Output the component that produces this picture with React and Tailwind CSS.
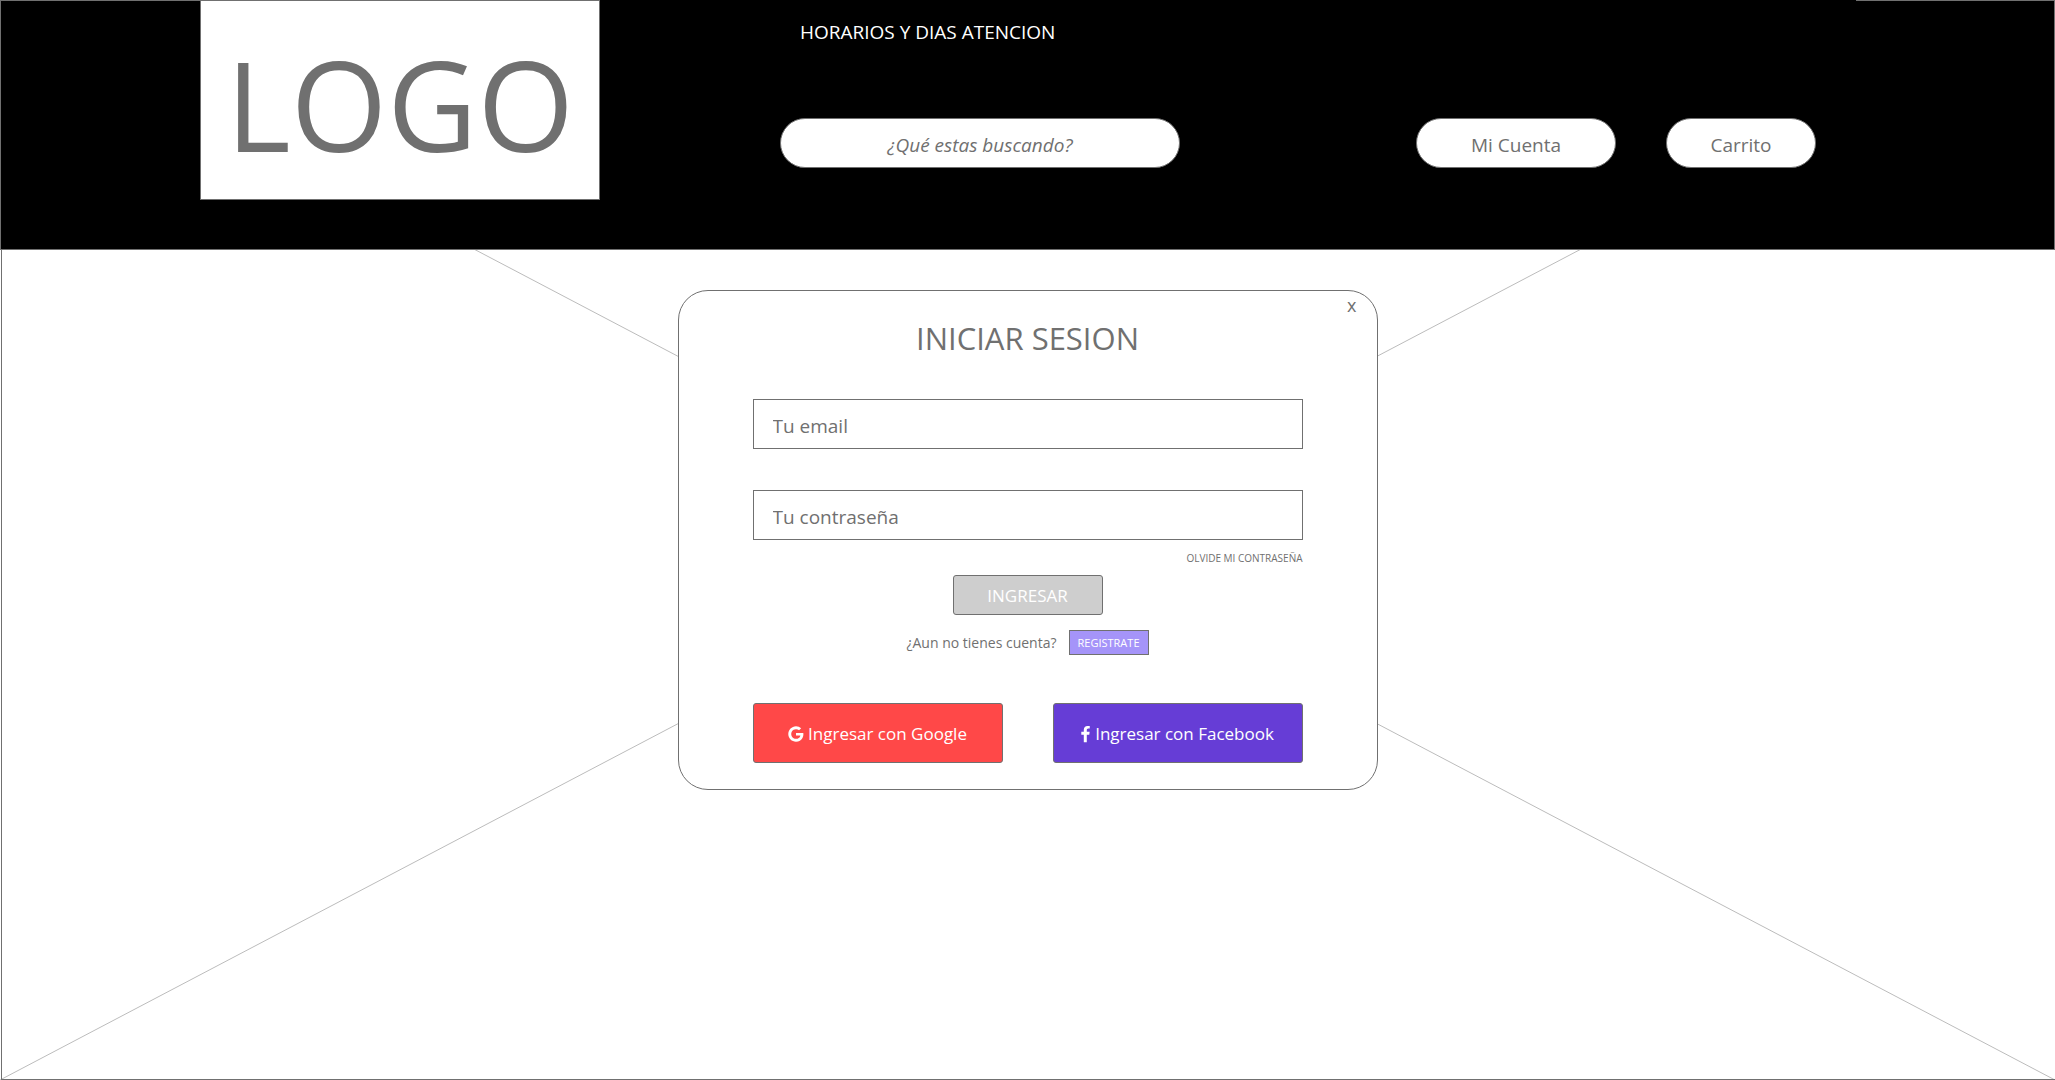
function GoogleIcon() {
  return (
    <svg viewBox="128 0 1536 1792" className="h-[18px] w-4" fill="currentColor" aria-hidden="true">
      <path d="M896 786h725q12 67 12 128 0 217-91 387.5t-259.5 266.5-386.5 96q-157 0-299-60.5t-245-163.5-163.5-245-60.5-299 60.5-299 163.5-245 245-163.5 299-60.5q300 0 515 201l-209 201q-123-119-306-119-129 0-238.5 65t-173.5 176.5-64 243.5 64 243.5 173.5 176.5 238.5 65q87 0 160-24t120-60 82-82 51.5-87 22.5-78h-436v-264z" />
    </svg>
  );
}

function FacebookIcon() {
  return (
    <svg viewBox="448 -64 1024 1792" className="h-[18px] w-[10px]" fill="currentColor" aria-hidden="true">
      <path d="M1343 12v264h-157q-86 0-116 36t-30 108v189h293l-39 296h-254v759h-306v-759h-255v-296h255v-218q0-186 104-288.5t277-102.5q147 0 228 12z" />
    </svg>
  );
}

function Header() {
  return (
    <header className="relative grid h-[250px] grid-cols-[199px_400px_180px_400px_1fr] border border-[#707070] bg-black">
      <div className="absolute -top-px right-[198px] left-[599px] h-px bg-black" />
      <div className="col-start-2 flex h-[199px] items-center justify-center border border-t-0 border-[#707070] bg-white pt-2">
        <a href="#inicio" className="text-[124px] leading-none">LOGO</a>
      </div>
      <div className="col-start-4 pt-[17px]">
        <p className="pl-5 text-[19px] leading-7 text-white">HORARIOS Y DIAS ATENCION</p>
        <input
          type="text"
          aria-label="¿Qué estas buscando?"
          placeholder="¿Qué estas buscando?"
          className="mt-[72px] h-[50px] w-full rounded-full border border-[#707070] bg-white pt-1 text-center text-[19px] italic placeholder:text-[#707070]"
        />
      </div>
      <nav className="col-start-5 flex justify-end gap-[50px] pt-[117px] pr-[238px]">
        <button type="button" className="h-[50px] w-[200px] rounded-full border border-[#707070] bg-white pt-1 text-[19px]">Mi Cuenta</button>
        <button type="button" className="h-[50px] w-[150px] rounded-full border border-[#707070] bg-white pt-1 text-[19px]">Carrito</button>
      </nav>
    </header>
  );
}

function LoginCard() {
  const field =
    "block h-[50px] w-full border border-[#707070] bg-white px-[19px] pt-1 text-[19px] placeholder:text-[#707070]";
  return (
    <form className="relative mx-auto mt-10 h-[500px] w-[700px] rounded-[30px] border border-[#707070] bg-white px-[74px]">
      <button type="button" className="absolute top-1 right-5 text-lg leading-5">x</button>
      <h1 className="pt-[26px] text-center text-[31px] leading-[42px]">INICIAR SESION</h1>
      <input type="email" aria-label="Tu email" placeholder="Tu email" className={`mt-10 ${field}`} />
      <input type="password" aria-label="Tu contraseña" placeholder="Tu contraseña" className={`mt-[41px] ${field}`} />
      <div className="mt-2 text-right text-[10px] leading-5">
        <a href="#recuperar">OLVIDE MI CONTRASEÑA</a>
      </div>
      <button type="submit" className="mx-auto mt-[7px] block h-10 w-[150px] rounded-[3px] border border-[#707070] bg-[#cecece] pt-0.5 text-[17px] text-white">INGRESAR</button>
      <div className="mt-[15px] flex items-center justify-center gap-3">
        <span className="text-sm">¿Aun no tienes cuenta?</span>
        <a href="#registro" className="flex h-[25px] w-20 items-center justify-center border border-[#707070] bg-[#a594f9] pt-0.5 text-[11px] text-white">REGISTRATE</a>
      </div>
      <div className="mt-12 flex justify-between text-[17px] text-white">
        <button type="button" className="flex h-[60px] w-[250px] items-center justify-center gap-1 rounded-[3px] border border-[#707070] bg-[#ff4848] pt-0.5">
          <GoogleIcon />
          Ingresar con Google
        </button>
        <button type="button" className="flex h-[60px] w-[250px] items-center justify-center gap-1 rounded-[3px] border border-[#707070] bg-[#663dd6] pt-0.5">
          <FacebookIcon />
          Ingresar con Facebook
        </button>
      </div>
    </form>
  );
}

export default function App() {
  return (
    <div className="relative isolate min-h-screen bg-white font-['Open_Sans',sans-serif] text-[#707070]">
      <svg className="absolute inset-0 -z-10 h-full w-full" aria-hidden="true">
        <line x1="0" y1="0" x2="100%" y2="100%" stroke="#bcbcbc" />
        <line x1="0" y1="100%" x2="100%" y2="0" stroke="#bcbcbc" />
      </svg>
      <div className="absolute inset-y-0 right-0 left-px -z-10 border border-r-0 border-[#707070]" />
      <Header />
      <main>
        <LoginCard />
      </main>
    </div>
  );
}
